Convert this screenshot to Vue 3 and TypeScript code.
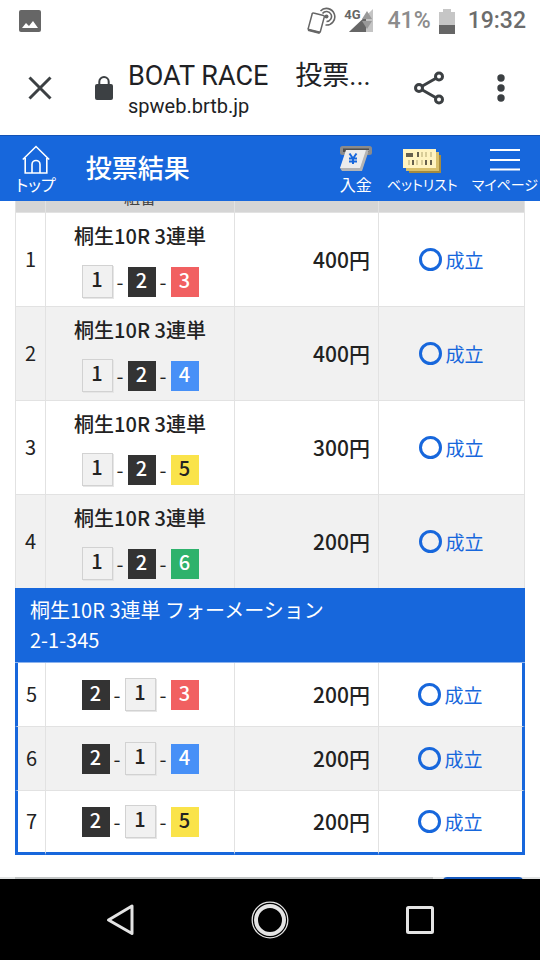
<script setup lang="ts">
interface Bet {
  no: number
  race?: string
  boats: number[]
  amount: number
}

const singleBets: Bet[] = [
  { no: 1, race: '桐生10R 3連単', boats: [1, 2, 3], amount: 400 },
  { no: 2, race: '桐生10R 3連単', boats: [1, 2, 4], amount: 400 },
  { no: 3, race: '桐生10R 3連単', boats: [1, 2, 5], amount: 300 },
  { no: 4, race: '桐生10R 3連単', boats: [1, 2, 6], amount: 200 },
]

const formationBets: Bet[] = [
  { no: 5, boats: [2, 1, 3], amount: 200 },
  { no: 6, boats: [2, 1, 4], amount: 200 },
  { no: 7, boats: [2, 1, 5], amount: 200 },
]
</script>

<template>
  <div class="screen">
    <div class="status">
      <svg class="status-picture" width="22" height="22" viewBox="0 0 22 22" aria-hidden="true">
        <rect width="22" height="22" rx="2" fill="#666" />
        <path d="M3 18l4-5 3 3 4-5 5 7z" fill="#fff" />
      </svg>
      <div class="status-right">
        <svg width="30" height="30" viewBox="0 0 30 30" fill="none" stroke="#666" aria-hidden="true">
          <path d="M7.500 7l10 2.600a1 1 0 0 1 .8 1.300l-4 14.800a1 1 0 0 1-1.300.8l-10-2.600a1 1 0 0 1-.8-1.300l4-14.800a1 1 0 0 1 1.300-.8z" stroke-width="1.500" />
          <path d="M2.200 22.500l12 3-.8 2.500-11.600-3z" fill="#666" stroke="none" />
          <circle cx="20.500" cy="10.500" r="2" fill="#666" stroke="none" />
          <path d="M16.500 7.500a5 5 0 1 1 4 8M14.500 5a8.300 8.300 0 1 1 5 14" stroke-width="1.600" />
        </svg>
        <span class="signal">
          <span class="network">4G</span>
          <svg width="24" height="24" viewBox="0 0 24 24" aria-hidden="true">
            <path d="M24 0v23H0z" fill="#c4c4c4" />
            <path d="M17 7v16H0z" fill="#666" />
            <path d="M13 10l5-8 5 8zM13 12h10l-5 8z" fill="#999" />
          </svg>
        </span>
        <span class="percent">41%</span>
        <svg class="battery" width="16" height="25" viewBox="0 0 16 25" aria-hidden="true">
          <path d="M4 0h8v3h4v22H0V3h4z" fill="#c6c6c6" />
          <path d="M0 16h16v9H0z" fill="#666" />
        </svg>
        <span class="clock">19:32</span>
      </div>
    </div>

    <div class="browser">
      <button class="plain close" type="button" aria-label="閉じる">
        <svg width="24" height="24" viewBox="0 0 24 24" fill="none" stroke="#3c4043" stroke-width="3"><path d="M1.500 1.500l21 21M22.500 1.500l-21 21" /></svg>
      </button>
      <svg class="lock" width="18" height="24" viewBox="0 0 18 24" aria-hidden="true">
        <rect y="8" width="18" height="16" rx="2" fill="#3c4043" />
        <path d="M4.300 9V5.700a4.700 4.700 0 0 1 9.400 0V9" fill="none" stroke="#3c4043" stroke-width="2" />
      </svg>
      <div class="page-info">
        <div class="page-title">BOAT RACE　投票...</div>
        <div class="page-host">spweb.brtb.jp</div>
      </div>
      <button class="plain share" type="button" aria-label="共有">
        <svg width="32" height="34" viewBox="0 0 32 34" fill="none" stroke="#3c4043" stroke-width="3">
          <circle cx="6" cy="17" r="3.500" /><circle cx="26" cy="5.500" r="3.500" /><circle cx="26" cy="28.500" r="3.500" />
          <path d="M9 15.300l14-8M9 18.700l14 8" />
        </svg>
      </button>
      <button class="plain" type="button" aria-label="メニュー">
        <svg width="8" height="28" viewBox="0 0 8 28" fill="#3c4043"><circle cx="4" cy="4" r="3.700" /><circle cx="4" cy="14" r="3.700" /><circle cx="4" cy="24" r="3.700" /></svg>
      </button>
    </div>

    <header class="site-header">
      <a class="nav-item" href="#top">
        <svg width="28" height="30" viewBox="0 0 28 30" fill="none" stroke="#fff" stroke-width="1.600">
          <path d="M.8 14.500L14 1.500l13.200 13M3.200 13v15h21.600V13M10 28v-8.500a4 4 0 0 1 8 0V28" />
        </svg>
        <span>トップ</span>
      </a>
      <h1>投票結果</h1>
      <nav>
        <a class="nav-item" href="#deposit">
          <svg width="34" height="30" viewBox="0 0 34 30">
            <rect x="1" y="1" width="32" height="9" rx="2.500" fill="#8b8b8b" />
            <rect x="4" y="3.500" width="26" height="3.500" fill="#4d4d4d" />
            <path d="M27 5h3l-7 21H3l-2-3z" fill="#b4b4b4" />
            <path d="M7 5h20l-6 18H1z" fill="#ececec" />
            <path d="M10.500 8.500l3.500 5 3.500-5M14 13.500V19M10 13.500h8M10 16.500h8" fill="none" stroke="#1767dc" stroke-width="2" />
          </svg>
          <span>入金</span>
        </a>
        <a class="nav-item long" href="#betlist">
          <svg width="38" height="30" viewBox="0 0 38 30">
            <path d="M6 10h32v18H6z" fill="#a58b3f" />
            <path d="M3 7h33v19H3z" fill="#d9c06c" />
            <path d="M0 4h33v19H0z" fill="#fff3c0" />
            <path d="M3 8h7v4H3zM14 7h2v5h-2zM9 15h2v5H9zM22 15h2v5h-2zM27 15h2v5h-2z" fill="#66604e" />
            <path d="M18 7h2v5h-2zM22 7h2v5h-2zM27 7h2v5h-2zM5 15h2v5H5zM13 15h2v5h-2zM18 15h2v5h-2z" fill="#d8cc98" />
          </svg>
          <span>ベットリスト</span>
        </a>
        <a class="nav-item long" href="#mypage">
          <svg width="30" height="30" viewBox="0 0 30 30" stroke="#fff" stroke-width="2"><path d="M0 5h30M0 15h30M0 24.500h30" /></svg>
          <span>マイページ</span>
        </a>
      </nav>
    </header>

    <main>
      <table>
        <colgroup>
          <col class="col-no" /><col /><col class="col-amount" /><col class="col-result" />
        </colgroup>
        <thead>
          <tr><th></th><th>組番</th><th></th><th></th></tr>
        </thead>
        <tbody class="singles">
          <tr v-for="bet in singleBets" :key="bet.no">
            <td class="number">{{ bet.no }}</td>
            <td>
              <div class="race">{{ bet.race }}</div>
              <div class="combo">
                <template v-for="(boat, i) in bet.boats" :key="boat">
                  <span v-if="i" class="dash">-</span>
                  <span class="boat" :class="'boat-' + boat">{{ boat }}</span>
                </template>
              </div>
            </td>
            <td class="number amount">{{ bet.amount }}円</td>
            <td><span class="result"><i class="ring"></i>成立</span></td>
          </tr>
        </tbody>
        <tbody class="formation">
          <tr class="group"><th colspan="4">桐生10R 3連単 フォーメーション<br />2-1-345</th></tr>
          <tr v-for="bet in formationBets" :key="bet.no">
            <td class="number">{{ bet.no }}</td>
            <td>
              <div class="combo">
                <template v-for="(boat, i) in bet.boats" :key="boat">
                  <span v-if="i" class="dash">-</span>
                  <span class="boat" :class="'boat-' + boat">{{ boat }}</span>
                </template>
              </div>
            </td>
            <td class="number amount">{{ bet.amount }}円</td>
            <td><span class="result"><i class="ring"></i>成立</span></td>
          </tr>
        </tbody>
      </table>
      <div class="actions">
        <div class="actions-track"></div>
        <button class="action" type="button" aria-label="次へ"></button>
      </div>
    </main>

    <div class="system-nav">
      <button class="plain" type="button" aria-label="戻る">
        <svg width="38" height="38" viewBox="0 0 38 38" fill="none" stroke="#e4e4e4" stroke-width="3" stroke-linejoin="round"><path d="M31 5v27.500L7.500 19z" /></svg>
      </button>
      <button class="plain" type="button" aria-label="ホーム">
        <svg width="38" height="38" viewBox="0 0 38 38" fill="none" stroke="#e4e4e4"><circle cx="19" cy="19" r="17.800" stroke-width="1.300" /><circle cx="19" cy="19" r="14" stroke-width="4" /></svg>
      </button>
      <button class="plain" type="button" aria-label="履歴">
        <svg width="38" height="38" viewBox="0 0 38 38" fill="none" stroke="#e4e4e4" stroke-width="3"><rect x="6.500" y="6.500" width="25" height="25" rx="1" /></svg>
      </button>
    </div>
  </div>
</template>

<style>
body {
  margin: 0;
  background: #fff;
}
</style>

<style scoped>
.screen {
  display: flex;
  flex-direction: column;
  height: 100vh;
  overflow: hidden;
  color: #222;
  font-family: "Noto Sans CJK JP", sans-serif;
}

.plain {
  display: flex;
  padding: 0;
  border: 0;
  background: none;
}

svg {
  display: block;
  flex: none;
}

.status {
  display: flex;
  justify-content: space-between;
  align-items: center;
  height: 42px;
  padding: 0 14px 0 19px;
  color: #757575;
  font: 500 23px/42px Roboto, sans-serif;
}

.status-right {
  display: flex;
  align-items: center;
}

.signal {
  display: flex;
  align-items: flex-start;
  margin-left: 8px;
}

.network {
  margin-right: -12px;
  color: #666;
  font: 700 13px/12px Roboto, sans-serif;
}

.percent {
  margin-left: 15px;
  color: #8c8c8c;
}

.battery {
  margin: 0 13px 0 8px;
}

.clock {
  color: #6c6c6c;
}

.browser {
  display: flex;
  align-items: center;
  box-sizing: border-box;
  height: 93px;
  padding: 0 35px 2px 28px;
}

.lock {
  margin: 0 15px 0 43px;
}

.page-info {
  flex: 1;
  padding-top: 6px;
  color: #202124;
  font-family: Roboto, "Noto Sans CJK JP", sans-serif;
  white-space: nowrap;
}

.page-title {
  font-size: 27px;
  line-height: 30px;
}

.page-host {
  font-size: 20px;
  line-height: 30px;
}

.share {
  margin-right: 52px;
}

.site-header {
  display: flex;
  align-items: center;
  box-sizing: border-box;
  height: 66px;
  padding: 0 2px 0 16px;
  border-top: 1px solid #1352b5;
  background: #1767dc;
  color: #fff;
}

.nav-item {
  display: flex;
  flex-direction: column;
  align-items: center;
  color: #fff;
  font-size: 16px;
  line-height: 18px;
  font-feature-settings: "palt";
  text-decoration: none;
  white-space: nowrap;
}

.long {
  font-size: 14px;
}

h1 {
  margin: 0 0 4px 30px;
  font-size: 26px;
  font-weight: 500;
  line-height: 36px;
}

nav {
  display: flex;
  gap: 14px;
  margin-left: auto;
}

main {
  flex: 1;
  min-height: 0;
  padding: 0 15px;
  overflow: hidden;
}

table {
  width: 100%;
  margin-top: -14px;
  border-spacing: 0;
  table-layout: fixed;
  font-size: 20px;
  line-height: 30px;
}

.col-no {
  width: 31px;
}

.col-amount {
  width: 144px;
}

.col-result {
  width: 146px;
}

thead th {
  height: 20px;
  padding: 0 0 5px;
  border-right: 1px solid #e2e2e2;
  border-bottom: 1px solid #e2e2e2;
  background: #d5d5d5;
  color: #444;
  font-size: 16px;
  font-weight: 400;
  line-height: 20px;
}

td {
  box-sizing: border-box;
  height: 94px;
  padding: 0;
  border-right: 1px solid #e2e2e2;
  border-bottom: 1px solid #e2e2e2;
  text-align: center;
}

thead th:first-child,
.singles td:first-child {
  border-left: 1px solid #e2e2e2;
}

.singles tr:last-child td {
  height: 93px;
  border-bottom: 0;
}

.singles tr:nth-child(even) td,
.formation tr:nth-child(odd) td {
  background: #f1f1f1;
}

.race {
  margin-bottom: 14px;
  font-weight: 500;
}

.combo {
  display: flex;
  justify-content: center;
  align-items: center;
  height: 34px;
}

.dash {
  width: 15px;
  line-height: 26px;
}

.boat {
  width: 28px;
  height: 30px;
  color: #fff;
  font-weight: 500;
  line-height: 26px;
}

.boat-1 {
  width: 29px;
  height: 31px;
  border: 1px solid #d2d2d2;
  background: #f1f1f1;
  box-shadow: 1px 1px 0 #e6e6e6;
  color: #222;
}

.boat-2 {
  background: #333;
}

.boat-3 {
  background: #f16061;
}

.boat-4 {
  background: #4790f7;
}

.boat-5 {
  background: #fae34a;
  color: #222;
}

.boat-6 {
  background: #2eb26c;
}

.number {
  padding-bottom: 2px;
}

.amount {
  padding-right: 8px;
  font-size: 21px;
  font-weight: 500;
  text-align: right;
}

.result {
  display: flex;
  justify-content: center;
  align-items: center;
  gap: 3px;
  color: #1767dc;
  font-size: 19px;
}

.ring {
  box-sizing: border-box;
  width: 23px;
  height: 23px;
  border: 3px solid #1767dc;
  border-radius: 50%;
}

.formation td {
  height: 64px;
}

.formation td:first-child {
  border-left: 3px solid #1767dc;
}

.formation td:last-child {
  border-right: 3px solid #1767dc;
}

.formation tr:last-child td {
  border-bottom: 3px solid #1767dc;
}

.group th {
  box-sizing: border-box;
  height: 75px;
  padding: 0 15px;
  border-bottom: 1px solid #8cb3ee;
  background: #1767dc;
  color: #fff;
  font-weight: 400;
  line-height: 30px;
  text-align: left;
}

.actions {
  display: flex;
  align-items: flex-start;
  gap: 10px;
  margin: 22px -15px 0;
  padding: 0 17px 0 15px;
  background: #e2e4e4;
}

.actions-track {
  flex: 1;
  height: 40px;
  background: #c2c5c5;
}

.action {
  width: 80px;
  height: 40px;
  border: 0;
  border-radius: 4px;
  background: #1558bd;
}

.system-nav {
  display: flex;
  justify-content: center;
  align-items: center;
  gap: 112px;
  height: 81px;
  background: #000;
}
</style>
